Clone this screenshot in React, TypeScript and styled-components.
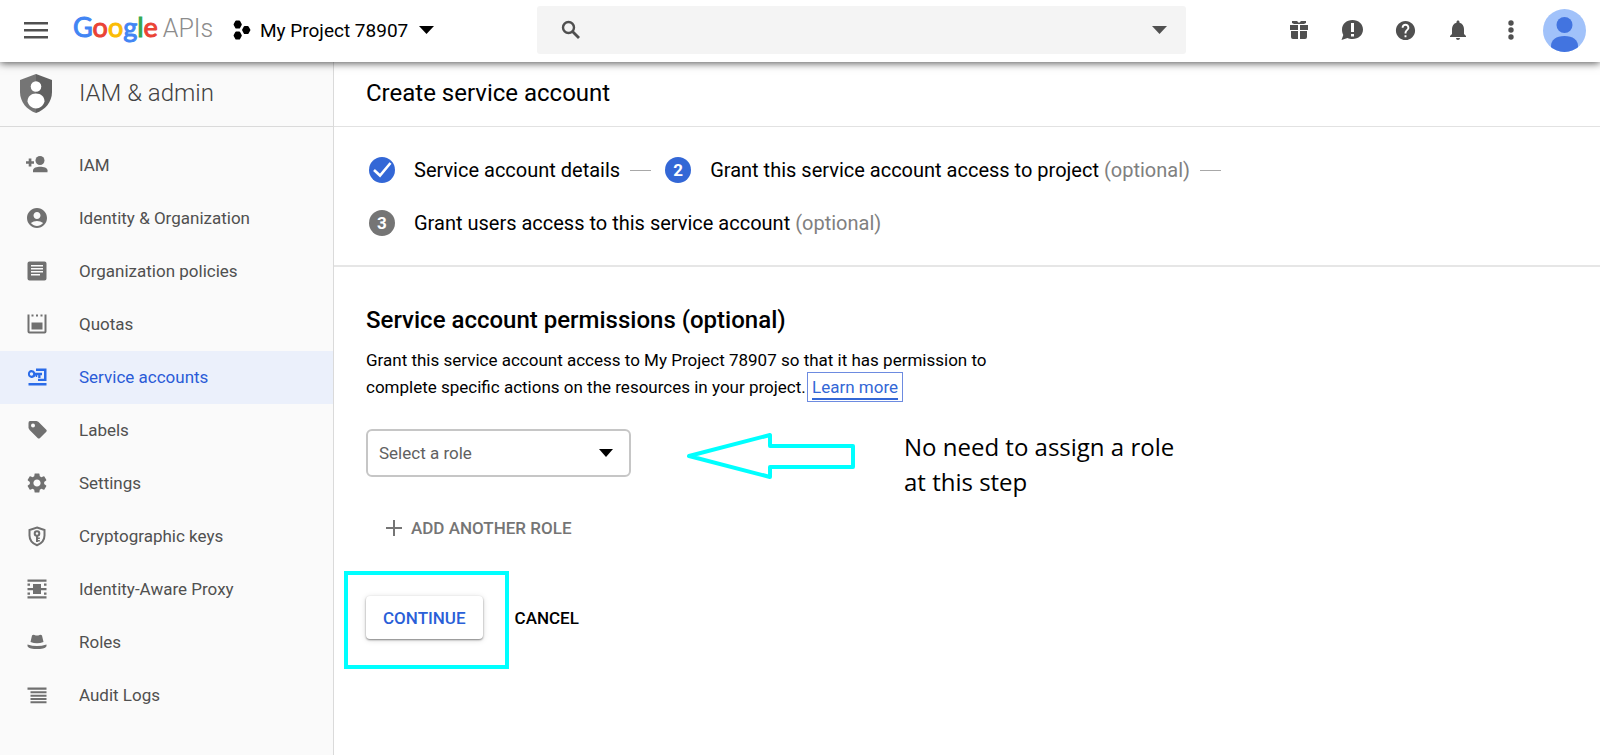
import React from "react";
import styled, { createGlobalStyle } from "styled-components";
import { MdAccountCircle, MdSettings, MdHelp, MdNotifications } from "react-icons/md";

const GlobalStyle = createGlobalStyle`
  *, *::before, *::after { box-sizing: border-box; }
  body {
    margin: 0;
    background: #fff;
    color: #000;
    font-family: Roboto, "Liberation Sans", sans-serif;
    font-size: 17px;
  }
  button, select, input { font: inherit; color: inherit; }
  button { border: 0; background: none; padding: 0; cursor: pointer; }
`;

const Page = styled.div`
  display: flex;
  flex-direction: column;
  min-height: 100vh;
`;

const TopBar = styled.header`
  display: flex;
  align-items: center;
  height: 62px;
  padding-bottom: 2px;
  background: #fff;
  box-shadow: 0 1px 8px rgba(0, 0, 0, 0.7);
  position: relative;
  z-index: 1;
`;

const BarStart = styled.div`
  display: flex;
  align-items: center;
  flex: 0 0 537px;
  padding-left: 24px;
`;

const IconButton = styled.button`
  display: flex;
  align-items: center;
  justify-content: center;
  color: #505050;
`;

const Logo = styled.a`
  display: flex;
  align-items: baseline;
  gap: 5px;
  margin-left: 25px;
  width: 160px;
  padding-bottom: 4px;
  text-decoration: none;
  font-family: Lato, sans-serif;
  line-height: 36px;
`;

const Brand = styled.span`
  font-size: 27px;
`;

const Letter = styled.span<{ $color: string }>`
  color: ${(p) => p.$color};
  -webkit-text-stroke: 1px ${(p) => p.$color};
`;

const BrandSuffix = styled.span`
  font-family: Roboto, sans-serif;
  font-size: 25px;
  font-weight: 300;
  color: #8c8c8c;
`;

const ProjectPicker = styled.button`
  display: flex;
  align-items: center;
  font-size: 19px;
`;

const ProjectName = styled.span`
  margin: 0 11px 0 9px;
`;

const SearchBox = styled.form`
  display: flex;
  align-items: center;
  flex: 1;
  height: 48px;
  padding: 0 19px 0 24px;
  border-radius: 3px;
  background: #f4f4f4;
  color: #505050;
`;

const SearchInput = styled.input`
  flex: 1;
  min-width: 0;
  margin: 0 12px;
  border: 0;
  outline: 0;
  background: transparent;
`;

const BarEnd = styled.div`
  display: flex;
  align-items: center;
  justify-content: flex-end;
  flex: 0 0 414px;
  gap: 29px;
  padding-right: 14px;
`;

const BarIcon = styled(IconButton)`
  width: 24px;
  height: 24px;
`;

const Avatar = styled.button`
  display: flex;
  margin-left: -9px;
`;

const Body = styled.div`
  display: flex;
  flex: 1;
`;

const Sidebar = styled.nav`
  flex: 0 0 334px;
  border-right: 1px solid #dadada;
  background: #fafafa;
`;

const SidebarHeader = styled.div`
  display: flex;
  align-items: center;
  height: 65px;
  padding: 0 0 2px 20px;
  border-bottom: 1px solid #dadada;
  color: #424242;
`;

const SidebarTitle = styled.h2`
  margin: 0 0 0 27px;
  font-size: 24px;
  font-weight: 300;
`;

const NavList = styled.ul`
  margin: 0;
  padding: 12px 0 0;
  list-style: none;
`;

const NavLink = styled.a<{ $active?: boolean }>`
  display: flex;
  align-items: center;
  height: 53px;
  padding: 0 0 2px 25px;
  gap: 30px;
  text-decoration: none;
  color: ${(p) => (p.$active ? "#2a5bd7" : "#505050")};
  background: ${(p) => (p.$active ? "#ebf0fb" : "transparent")};
  svg { color: ${(p) => (p.$active ? "#2a6be8" : "#707070")}; }
`;

const Main = styled.main`
  flex: 1;
  min-width: 0;
`;

const TitleBar = styled.div`
  display: flex;
  align-items: center;
  height: 65px;
  padding: 0 32px 2px;
  border-bottom: 1px solid #e2e2e2;
`;

const Title = styled.h1`
  margin: 0;
  font-size: 24px;
  font-weight: 400;
`;

const Steps = styled.ol`
  display: flex;
  flex-wrap: wrap;
  gap: 27px 14px;
  margin: 0;
  padding: 30px 32px 29px 35px;
  border-bottom: 2px solid #e6e6e6;
  list-style: none;
  font-size: 20px;
  line-height: 24px;
`;

const Step = styled.li`
  display: flex;
  align-items: center;
  height: 26px;
`;

const StepBadge = styled.span<{ $done?: boolean }>`
  display: flex;
  align-items: center;
  justify-content: center;
  width: 26px;
  height: 26px;
  margin-right: 19px;
  border-radius: 50%;
  background: ${(p) => (p.$done ? "#3367d6" : "#757575")};
  color: #fff;
  font-size: 17px;
  font-weight: 700;
`;

const Optional = styled.span`
  color: #808080;
`;

const StepDash = styled.span`
  width: 21px;
  height: 1px;
  margin-left: 10px;
  background: #a8a8a8;
`;

const Content = styled.section`
  padding: 38px 32px;
`;

const SectionTitle = styled.h3`
  margin: 0;
  font-size: 24px;
  line-height: 30px;
  font-weight: 500;
`;

const Description = styled.p`
  max-width: 650px;
  margin: 12px 0 28px;
  line-height: 27px;
`;

const LearnMore = styled.a`
  margin-left: 2px;
  color: #3367d6;
  text-decoration: underline 2px;
  text-decoration-skip-ink: none;
  text-underline-offset: 5px;
  outline: 1px solid #6d8be0;
  outline-offset: 4px;
`;

const RoleRow = styled.div`
  display: flex;
  align-items: flex-start;
`;

const SelectWrap = styled.div`
  display: grid;
  align-items: center;
  width: 265px;
  > * { grid-area: 1 / 1; }
  > svg { justify-self: end; margin-right: 18px; pointer-events: none; }
`;

const RoleSelect = styled.select`
  width: 100%;
  height: 48px;
  padding: 0 11px;
  border: 2px solid #c6c6c6;
  border-radius: 6px;
  background: #fff;
  color: #616161;
  appearance: none;
`;

const Note = styled.p`
  width: 288px;
  margin: 0 0 0 47px;
  font-family: "Open Sans", sans-serif;
  font-size: 24px;
  line-height: 35px;
`;

const ArrowSlot = styled.div`
  display: flex;
  padding: 3px 0 0 56px;
`;

const AddRole = styled.button`
  display: flex;
  align-items: center;
  gap: 9px;
  margin: 17px 0 0 20px;
  line-height: 24px;
  font-weight: 500;
  color: #757575;
`;

const Actions = styled.div`
  display: flex;
  align-items: center;
  gap: 32px;
  margin-top: 56px;
  font-weight: 500;
`;

const Marked = styled.div`
  position: relative;
  &::after {
    content: "";
    position: absolute;
    inset: -25px -26px -30px -22px;
    border: 4px solid #00ffff;
    pointer-events: none;
  }
`;

const ContinueButton = styled.button`
  height: 43px;
  padding: 0 17px;
  border-radius: 4px;
  background: #fff;
  color: #2a5fd8;
  font-weight: 500;
  box-shadow: 0 1px 2px rgba(0, 0, 0, 0.45), 0 1px 6px rgba(0, 0, 0, 0.14);
`;

const CancelButton = styled.button`
  font-weight: 500;
`;

type GlyphProps = { size?: number; children: React.ReactNode };

const Glyph = ({ size = 24, children }: GlyphProps) => (
  <svg width={size} height={size} viewBox="0 0 24 24" fill="currentColor" aria-hidden="true">
    {children}
  </svg>
);

const Caret = ({ width = 15 }: { width?: number }) => (
  <svg width={width} height="8" viewBox="0 0 16 8" preserveAspectRatio="none" fill="currentColor" aria-hidden="true">
    <path d="M0 0h16L8 8z" />
  </svg>
);

const MenuIcon = () => (
  <svg width="24" height="18" viewBox="0 0 24 18" fill="currentColor" aria-hidden="true">
    <path d="M0 1h24v2.400H0zM0 8h24v2.400H0zM0 15h24v2.400H0z" />
  </svg>
);

const ProjectIcon = () => (
  <svg width="18" height="20" viewBox="0 0 18 20" strokeWidth="2" stroke="currentColor" strokeLinejoin="round" aria-hidden="true">
    <path d="M3.200 1.500h3L7.800 4.500 6.200 7.500h-3L1.600 4.500zM3.200 12.500h3l1.600 3-1.600 3h-3l-1.600-3zM11.700 7h3l1.700 3-1.700 3h-3L10.100 10z" />
  </svg>
);

const SearchIcon = () => (
  <svg width="20" height="20" viewBox="0 0 20 20" fill="none" stroke="currentColor" aria-hidden="true">
    <circle cx="7.500" cy="7.500" r="5.500" strokeWidth="2.400" />
    <path d="M11.500 11.500l6.500 6.500" strokeWidth="2.800" />
  </svg>
);

const GiftIcon = () => (
  <Glyph>
    <path d="M5 3h5l2 2 2-2h5v2l-2 1H7L5 5zM3 7h8v5H3zM13 7h8v5h-8zM4 13h7v8H6q-2 0-2-2zM13 13h7v6q0 2-2 2h-5z" />
  </Glyph>
);

const FeedbackIcon = () => (
  <Glyph>
    <path fillRule="evenodd" d="M12.500 2C18.500 2 23 6 23 11.500S18.500 21 12.500 21c-2 0-3.500-.4-5-1.100L1.500 22l1.800-5C2.500 15.500 2 13.500 2 11.500 2 6 6.500 2 12.500 2zM11 5v9h3V5zm0 11v2.500h3V16z" />
  </Glyph>
);

const MoreIcon = () => (
  <Glyph>
    <circle cx="12" cy="5" r="2.700" />
    <circle cx="12" cy="12" r="2.700" />
    <circle cx="12" cy="19" r="2.700" />
  </Glyph>
);

const CheckIcon = () => (
  <svg width="26" height="26" viewBox="0 0 26 26" fill="none" stroke="currentColor" strokeWidth="2.600" aria-hidden="true">
    <path d="M5 13l6 5.500L21.500 6" />
  </svg>
);

const AvatarIcon = () => (
  <svg width="43" height="43" viewBox="0 0 43 43" aria-hidden="true">
    <clipPath id="avatarClip"><circle cx="21.500" cy="21.500" r="21.500" /></clipPath>
    <g clipPath="url(#avatarClip)">
      <rect width="43" height="43" fill="#a1c2fa" />
      <circle cx="21.500" cy="16" r="8" fill="#4274e0" />
      <path d="M8 43v-6c0-6 5-10 13.500-10S35 31 35 37v6z" fill="#4274e0" />
    </g>
  </svg>
);

const ShieldIcon = () => (
  <svg width="32" height="39" viewBox="0 0 32 39" aria-hidden="true">
    <path d="M16 0L0 6v12c0 10 7 18 16 21z" fill="#757575" />
    <path d="M16 0l16 6v12c0 10-7 18-16 21z" fill="#616161" />
    <circle cx="16" cy="12.500" r="5.300" fill="#fff" />
    <path d="M7.500 27.500c0-5 3.500-8 8.500-8s8.500 3 8.500 8c-1 4-4.500 7-8.500 7s-7.500-3-8.500-7z" fill="#fff" />
  </svg>
);

const PersonAddIcon = () => (
  <Glyph>
    <path d="M3.700 5.500h2.700v2.700H9v2.600H6.400v2.700H3.700v-2.700H1V8.200h2.700z" />
    <circle cx="15" cy="7.500" r="4.500" />
    <path d="M8 19.200v-2c0-2.500 4-3.500 7.200-3.500s7.300 1 7.300 3.500v2z" />
  </Glyph>
);

const PolicyIcon = () => (
  <Glyph>
    <path fillRule="evenodd" d="M4.500 2.500h15q2 0 2 2v15q0 2-2 2h-15q-2 0-2-2v-15q0-2 2-2zM6 6v1.500h12V6zm0 3v1.500h12V9zm0 3v1.500h12V12zm0 3v1.500h9V15z" />
  </Glyph>
);

const QuotaIcon = () => (
  <Glyph>
    <path d="M2.500 2.500h2v17h15v-17h2v17q0 2-2 2h-15q-2 0-2-2zM6.500 2.500h2v2h-2zM11 2.500h2v2h-2zM15.500 2.500h2v2h-2zM6.500 10.500h11v7h-11z" />
  </Glyph>
);

const ServiceIcon = () => (
  <Glyph>
    <path fillRule="evenodd" d="M6.500 5a4 4 0 0 1 3.800 2.700H17v2.600h-1.500V13h-2.300v-2.700h-1V12h-1.500v-1.700A4 4 0 1 1 6.500 5zm0 2.300a1.700 1.700 0 1 0 0 3.400 1.700 1.700 0 0 0 0-3.400z" />
    <path d="M11 3.500h10.500v12.500H13v-2.200h6V6h-8zM3.500 18h18v2.500h-18z" />
  </Glyph>
);

const TagIcon = () => (
  <Glyph>
    <path fillRule="evenodd" d="M5 3h6.500l1.800.8 8 8q1 1 0 2L15 20q-1.200 1-2.400 0l-8-8L3.500 10V5Q3.500 3 5 3zm3 2.500a2 2 0 1 0 0 4 2 2 0 0 0 0-4z" />
  </Glyph>
);

const KeyShieldIcon = () => (
  <Glyph>
    <path d="M12 3.500l7.500 2.500v5.500c0 4.500-3 8-7.500 9.700-4.500-1.700-7.500-5.200-7.500-9.700V6z" fill="none" stroke="currentColor" strokeWidth="2" />
    <circle cx="12" cy="9.500" r="2.300" fill="none" stroke="currentColor" strokeWidth="2" />
    <path d="M11 11.500h2V18h-2zM13 13.500h1.800v1.400H13zM13 16h1.800v1.400H13z" />
  </Glyph>
);

const ProxyIcon = () => (
  <Glyph>
    <path d="M2.500 2.500h19v2.200h-19zM2.500 19.300h19v2.200h-19zM8 7h8v10H8zM2.500 11h19v2.200h-19zM2.500 6.500h2.500v2.200H2.500zM19 6.500h2.500v2.200H19zM2.500 15.500h2.500v2.200H2.500zM19 15.500h2.500v2.200H19z" />
  </Glyph>
);

const HatIcon = () => (
  <Glyph>
    <path d="M7 5.500q1-1 2.500-.5 2.500 1 5 0 1.500-.5 2.500.5l1.500 6.500q-6.500 2.500-13 0zM2.500 14.500q9.500 3 19 0v1.700Q20.500 18 18 18.500q-6 1-12 0-2.500-.5-3.500-2.300z" />
  </Glyph>
);

const LogsIcon = () => (
  <Glyph>
    <path d="M2.500 4.500h19v2.200h-19zM5.500 8.200h16v2h-16zM5.500 11.700h16v2h-16zM5.500 15h16v2h-16zM5.500 18.200h16v2h-16z" />
  </Glyph>
);

const PlusIcon = () => (
  <svg width="16" height="16" viewBox="0 0 16 16" fill="currentColor" aria-hidden="true">
    <path d="M7 0h2v7h7v2H9v7H7V9H0V7h7z" />
  </svg>
);

const PointerArrow = () => (
  <svg width="170" height="48" viewBox="0 0 170 48" fill="none" stroke="#00ffff" strokeWidth="4" strokeLinejoin="round" aria-hidden="true">
    <path d="M2 24L83 3v11h83v21H83v10z" />
  </svg>
);

const navItems = [
  { label: "IAM", icon: <PersonAddIcon /> },
  { label: "Identity & Organization", icon: <MdAccountCircle size={24} /> },
  { label: "Organization policies", icon: <PolicyIcon /> },
  { label: "Quotas", icon: <QuotaIcon /> },
  { label: "Service accounts", icon: <ServiceIcon />, active: true },
  { label: "Labels", icon: <TagIcon /> },
  { label: "Settings", icon: <MdSettings size={24} /> },
  { label: "Cryptographic keys", icon: <KeyShieldIcon /> },
  { label: "Identity-Aware Proxy", icon: <ProxyIcon /> },
  { label: "Roles", icon: <HatIcon /> },
  { label: "Audit Logs", icon: <LogsIcon /> },
];

const brandLetters = [
  ["G", "#4285f4"],
  ["o", "#ea4335"],
  ["o", "#fbbc05"],
  ["g", "#4285f4"],
  ["l", "#34a853"],
  ["e", "#ea4335"],
];

export default function App() {
  return (
    <Page>
      <GlobalStyle />
      <TopBar>
        <BarStart>
          <IconButton aria-label="Main menu"><MenuIcon /></IconButton>
          <Logo href="#">
            <Brand>
              {brandLetters.map(([letter, color], i) => (
                <Letter key={i} $color={color}>{letter}</Letter>
              ))}
            </Brand>
            <BrandSuffix>APIs</BrandSuffix>
          </Logo>
          <ProjectPicker>
            <ProjectIcon />
            <ProjectName>My Project 78907</ProjectName>
            <Caret />
          </ProjectPicker>
        </BarStart>
        <SearchBox role="search">
          <SearchIcon />
          <SearchInput type="search" aria-label="Search" />
          <IconButton type="button" aria-label="Search options"><Caret /></IconButton>
        </SearchBox>
        <BarEnd>
          <BarIcon aria-label="Offers"><GiftIcon /></BarIcon>
          <BarIcon aria-label="Send feedback"><FeedbackIcon /></BarIcon>
          <BarIcon aria-label="Help"><MdHelp size={23} /></BarIcon>
          <BarIcon aria-label="Notifications"><MdNotifications size={24} /></BarIcon>
          <BarIcon aria-label="More"><MoreIcon /></BarIcon>
          <Avatar aria-label="Account"><AvatarIcon /></Avatar>
        </BarEnd>
      </TopBar>
      <Body>
        <Sidebar>
          <SidebarHeader>
            <ShieldIcon />
            <SidebarTitle>IAM &amp; admin</SidebarTitle>
          </SidebarHeader>
          <NavList>
            {navItems.map((item) => (
              <li key={item.label}>
                <NavLink href="#" $active={item.active}>
                  {item.icon}
                  {item.label}
                </NavLink>
              </li>
            ))}
          </NavList>
        </Sidebar>
        <Main>
          <TitleBar><Title>Create service account</Title></TitleBar>
          <Steps>
            <Step>
              <StepBadge $done><CheckIcon /></StepBadge>
              Service account details
              <StepDash />
            </Step>
            <Step>
              <StepBadge $done>2</StepBadge>
              <span>Grant this service account access to project <Optional>(optional)</Optional></span>
              <StepDash />
            </Step>
            <Step>
              <StepBadge>3</StepBadge>
              <span>Grant users access to this service account <Optional>(optional)</Optional></span>
            </Step>
          </Steps>
          <Content>
            <SectionTitle>Service account permissions (optional)</SectionTitle>
            <Description>
              Grant this service account access to My Project 78907 so that it has permission to
              complete specific actions on the resources in your project.{" "}
              <LearnMore href="#">Learn more</LearnMore>
            </Description>
            <RoleRow>
              <SelectWrap>
                <RoleSelect aria-label="Role" defaultValue="">
                  <option value="">Select a role</option>
                </RoleSelect>
                <Caret width={14} />
              </SelectWrap>
              <ArrowSlot><PointerArrow /></ArrowSlot>
              <Note>No need to assign a role at this step</Note>
            </RoleRow>
            <AddRole><PlusIcon />ADD ANOTHER ROLE</AddRole>
            <Actions>
              <Marked><ContinueButton>CONTINUE</ContinueButton></Marked>
              <CancelButton>CANCEL</CancelButton>
            </Actions>
          </Content>
        </Main>
      </Body>
    </Page>
  );
}
